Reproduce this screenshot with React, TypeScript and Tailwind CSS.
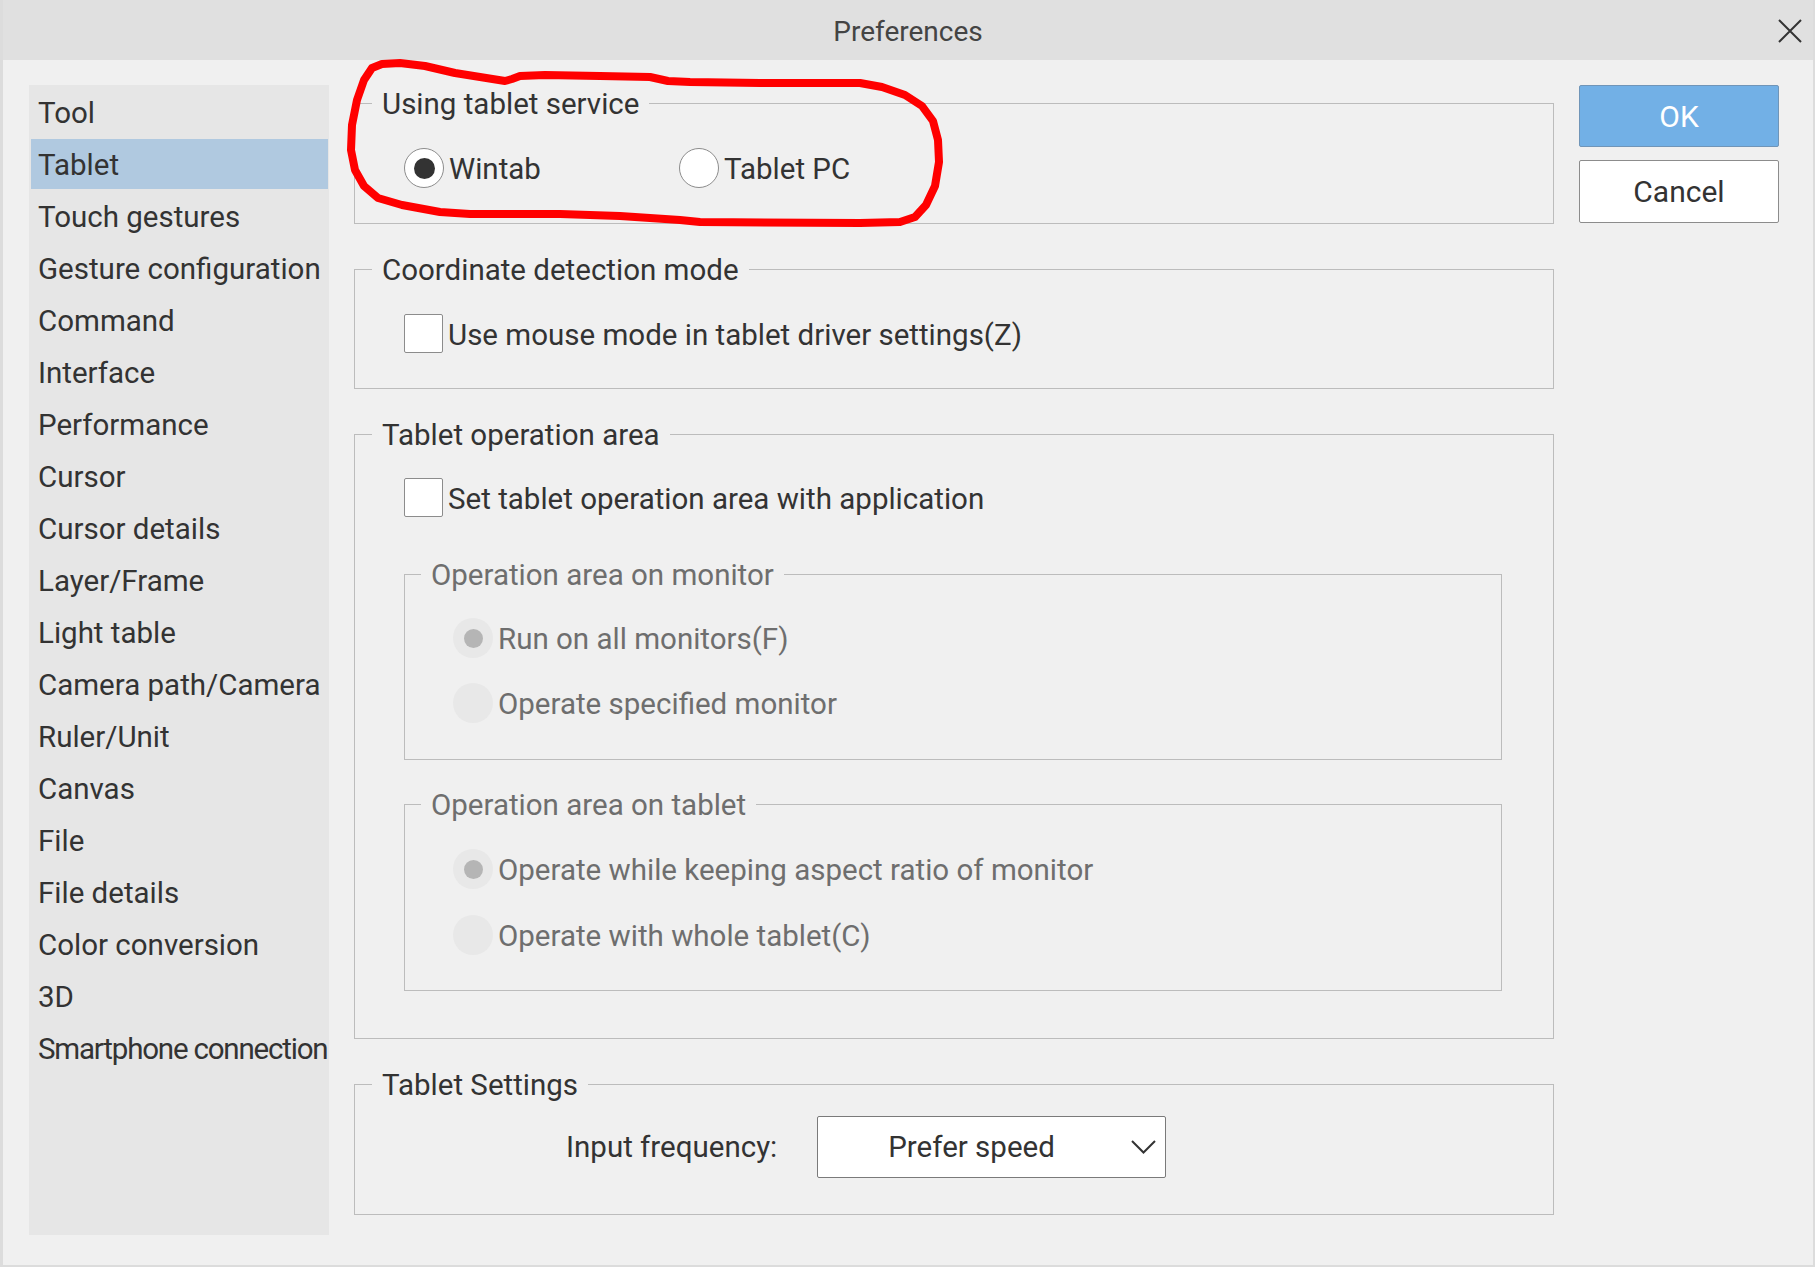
import React from 'react';

const menu = [
  'Tool',
  'Tablet',
  'Touch gestures',
  'Gesture configuration',
  'Command',
  'Interface',
  'Performance',
  'Cursor',
  'Cursor details',
  'Layer/Frame',
  'Light table',
  'Camera path/Camera',
  'Ruler/Unit',
  'Canvas',
  'File',
  'File details',
  'Color conversion',
  '3D',
  'Smartphone connection',
];

// red hand-drawn loop around the first group
const loop =
  'M382,64 L400,63 L425,66 L455,73 L480,77 L505,81 L512,79 L520,76 L545,75 L600,76 L650,77 L668,81 L690,82 L760,83 L860,83 L882,87 L905,95 L922,106 L933,121 L938,140 L939,162 L935,186 L926,205 L915,217 L900,222 L860,223 L700,222 L680,220 L620,216 L560,214 L470,214 L440,212 L402,205 L378,198 L364,186 L355,170 L351,150 L352,125 L357,100 L364,80 L372,68 Z';

const Radio = ({ checked, disabled }: { checked?: boolean; disabled?: boolean }) => {
  if (disabled) {
    return (
      <span className="w-[40px] h-[40px] rounded-full bg-[#e8e8e8] flex items-center justify-center shrink-0">
        {checked && <span className="w-[19px] h-[19px] rounded-full bg-[#b5b5b5]" />}
      </span>
    );
  }
  return (
    <span className="w-[40px] h-[40px] rounded-full bg-white border border-[#8c8c8c] flex items-center justify-center shrink-0">
      {checked && <span className="w-[21px] h-[21px] rounded-full bg-[#333333]" />}
    </span>
  );
};

const Checkbox = () => (
  <span className="w-[39px] h-[39px] bg-white border border-[#8c8c8c] rounded-[2px] shrink-0" />
);

const Group = ({
  title,
  muted,
  children,
}: {
  title: string;
  muted?: boolean;
  children: React.ReactNode;
}) => (
  <fieldset className="border border-[#bcbcbc] p-0 m-0 min-w-0">
    <legend
      className={`px-[10px] leading-[40px] text-[29.5px] ${muted ? 'ml-[16px] text-[#6e6e6e]' : 'ml-[17px] text-[#333333]'}`}
    >
      <span className="relative top-px">{title}</span>
    </legend>
    {children}
  </fieldset>
);

const DisabledOption = ({ label, checked }: { label: string; checked?: boolean }) => (
  <div className="flex items-center gap-[5px] h-[40px]">
    <Radio disabled checked={checked} />
    <span className="text-[29.5px] text-[#6e6e6e] leading-none pt-[4px]">{label}</span>
  </div>
);

export default function App() {
  return (
    <div className="w-[1815px] h-[1267px] flex flex-col bg-[#f0f0f0] border-l-[3px] border-r-2 border-b-2 border-[#dcdcdc] font-['Roboto',sans-serif] text-[#333333] relative overflow-hidden">
      {/* Title bar */}
      <div className="h-[60px] bg-[#e0e0e0] flex items-center justify-center relative shrink-0">
        <span className="text-[28px] text-[#444444] pt-[4px]">Preferences</span>
        <svg className="absolute right-[11px] top-[19px]" width="24" height="24" viewBox="0 0 24 24">
          <path d="M1 1 L23 23 M23 1 L1 23" stroke="#333" strokeWidth="2" fill="none" />
        </svg>
      </div>

      <div className="flex pl-[26px] pt-[23px] gap-[25px]">
        {/* Sidebar */}
        <div className="w-[300px] h-[1150px] bg-[#e6e6e6] mt-[2px] pt-px">
          {menu.map((m) => (
            <div key={m} className="h-[52px] flex items-center pl-[2px] pr-px">
              <div
                className={`h-[50px] w-full flex items-center pl-[7px] pt-[2px] text-[29.5px] whitespace-nowrap ${m === 'Tablet' ? 'bg-[#b0c9e0]' : ''} ${m === 'Smartphone connection' ? 'tracking-[-1.2px]' : ''}`}
              >
                {m}
              </div>
            </div>
          ))}
        </div>

        {/* Main panel */}
        <div className="w-[1200px] flex flex-col gap-[25px]">
          <Group title="Using tablet service">
            <div className="flex items-center pl-[49px] pt-[25px] pb-[35px]">
              <div className="w-[275px] flex items-center gap-[5px]">
                <Radio checked />
                <span className="text-[29.5px] leading-none pt-[4px]">Wintab</span>
              </div>
              <div className="flex items-center gap-[5px]">
                <Radio />
                <span className="text-[29.5px] leading-none pt-[4px]">Tablet PC</span>
              </div>
            </div>
          </Group>

          <Group title="Coordinate detection mode">
            <div className="flex items-center gap-[5px] pl-[49px] pt-[25px] pb-[35px]">
              <Checkbox />
              <span className="text-[29.5px] leading-none pt-[4px]">Use mouse mode in tablet driver settings(Z)</span>
            </div>
          </Group>

          <Group title="Tablet operation area">
            <div className="flex flex-col pl-[49px] pr-[51px] pt-[24px] pb-[47px]">
              <div className="flex items-center gap-[5px]">
                <Checkbox />
                <span className="text-[29.5px] leading-none pt-[4px]">Set tablet operation area with application</span>
              </div>
              <div className="mt-[37px]">
                <Group title="Operation area on monitor" muted>
                  <div className="flex flex-col gap-[25px] pl-[48px] pt-[24px] pb-[36px]">
                    <DisabledOption label="Run on all monitors(F)" checked />
                    <DisabledOption label="Operate specified monitor" />
                  </div>
                </Group>
              </div>
              <div className="mt-[24px]">
                <Group title="Operation area on tablet" muted>
                  <div className="flex flex-col gap-[26px] pl-[48px] pt-[25px] pb-[35px]">
                    <DisabledOption label="Operate while keeping aspect ratio of monitor" checked />
                    <DisabledOption label="Operate with whole tablet(C)" />
                  </div>
                </Group>
              </div>
            </div>
          </Group>

          <Group title="Tablet Settings">
            <div className="flex items-center gap-[40px] pl-[211px] pt-[12px] pb-[36px]">
              <span className="text-[29.5px] leading-none pt-[2px]">Input frequency:</span>
              <div className="w-[349px] h-[62px] bg-white border border-[#7a7a7a] rounded-[2px] flex items-center pl-[70px] pr-[9px]">
                <span className="text-[29.5px] leading-none pt-[2px]">Prefer speed</span>
                <svg className="ml-auto" width="25" height="14" viewBox="0 0 25 14">
                  <path d="M1 1 L12.5 12.5 L24 1" stroke="#333" strokeWidth="2" fill="none" />
                </svg>
              </div>
            </div>
          </Group>
        </div>

        {/* Buttons */}
        <div className="w-[200px] flex flex-col gap-[13px] mt-[2px]">
          <button className="h-[62px] bg-[#72b0e6] border border-[#7095b8] rounded-[2px] text-white text-[30px]">
            OK
          </button>
          <button className="h-[63px] bg-white border border-[#8c8c8c] rounded-[2px] text-[#333333] text-[30px]">
            Cancel
          </button>
        </div>
      </div>

      {/* annotation overlay */}
      <svg className="absolute left-[-3px] top-0 pointer-events-none" width="1815" height="1267">
        <path d={loop} stroke="#ff0000" strokeWidth="8" fill="none" strokeLinejoin="round" strokeLinecap="round" />
      </svg>
    </div>
  );
}
